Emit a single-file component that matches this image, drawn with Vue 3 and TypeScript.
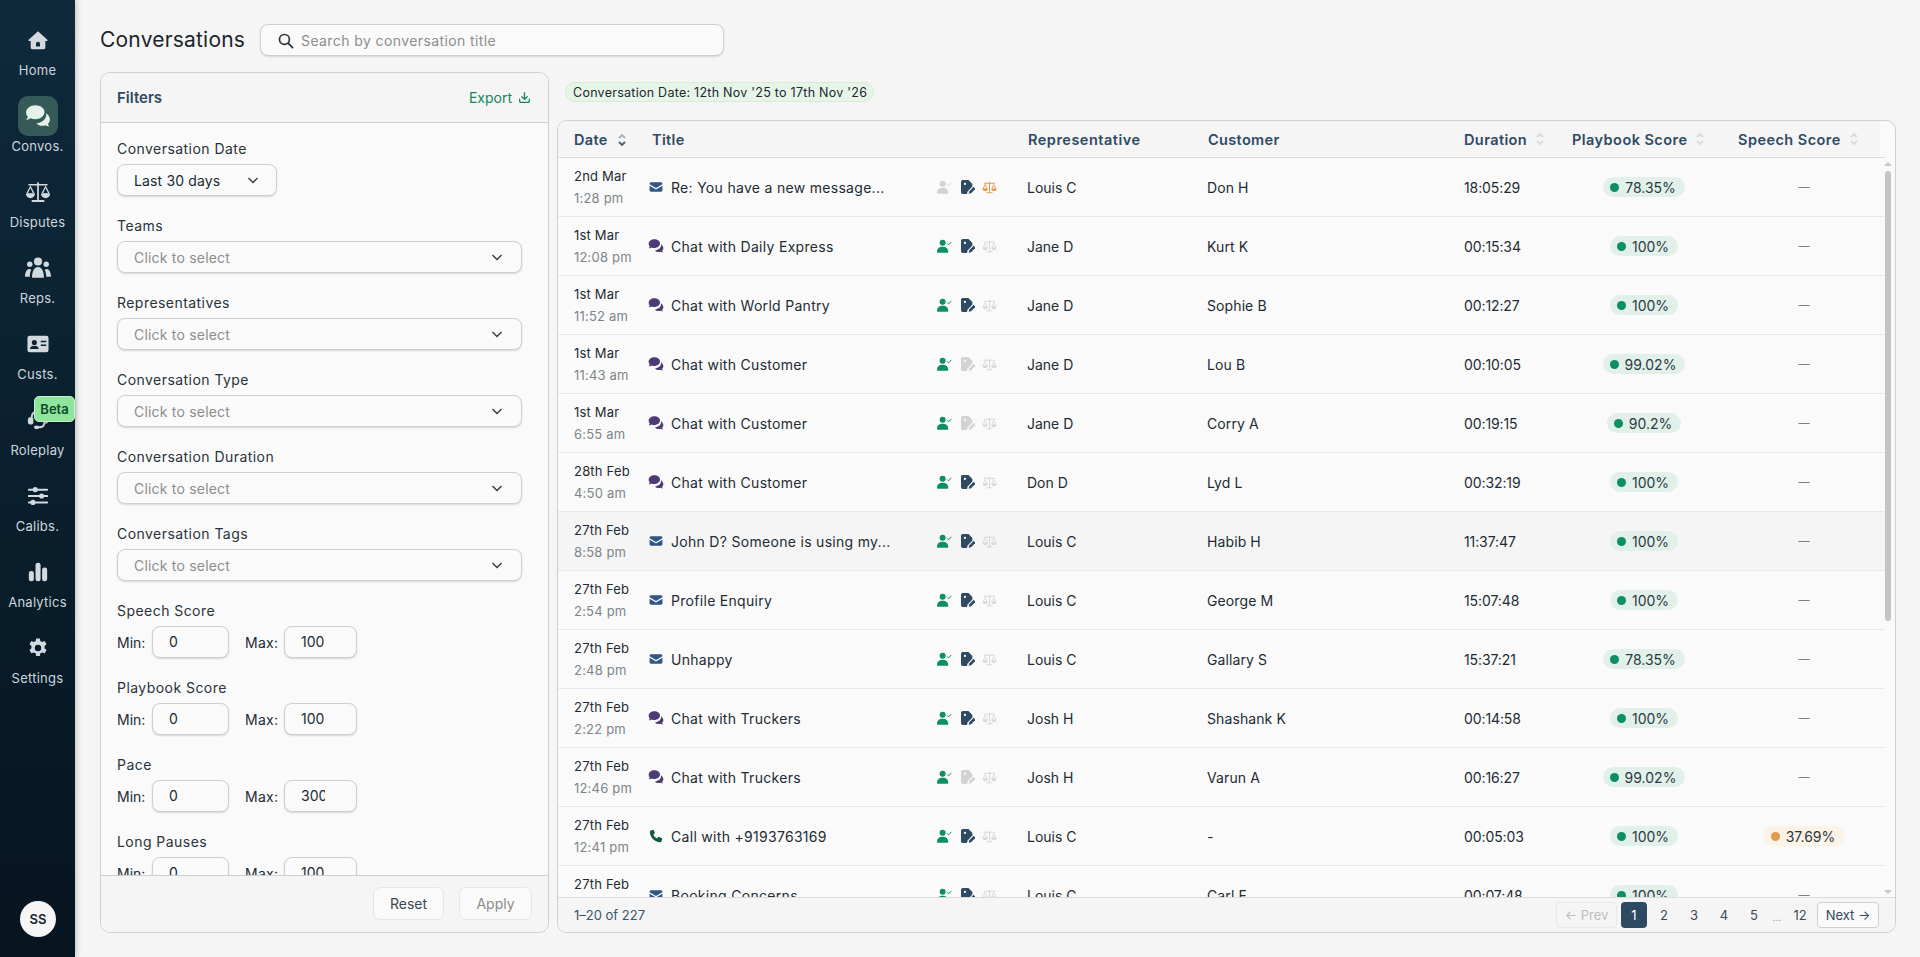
<script setup lang="ts">
type Kind = 'mail' | 'chat' | 'call'
interface Row {
  d: string; t: string; kind: Kind; title: string; agent: boolean; note: boolean; dispute: boolean
  rep: string; cust: string; dur: string; score: string; speech?: string; hover?: boolean
}
const rows: Row[] = [
  { d: '2nd Mar', t: '1:28 pm', kind: 'mail', title: 'Re: You have a new message...', agent: false, note: true, dispute: true, rep: 'Louis C', cust: 'Don H', dur: '18:05:29', score: '78.35%' },
  { d: '1st Mar', t: '12:08 pm', kind: 'chat', title: 'Chat with Daily Express', agent: true, note: true, dispute: false, rep: 'Jane D', cust: 'Kurt K', dur: '00:15:34', score: '100%' },
  { d: '1st Mar', t: '11:52 am', kind: 'chat', title: 'Chat with World Pantry', agent: true, note: true, dispute: false, rep: 'Jane D', cust: 'Sophie B', dur: '00:12:27', score: '100%' },
  { d: '1st Mar', t: '11:43 am', kind: 'chat', title: 'Chat with Customer', agent: true, note: false, dispute: false, rep: 'Jane D', cust: 'Lou B', dur: '00:10:05', score: '99.02%' },
  { d: '1st Mar', t: '6:55 am', kind: 'chat', title: 'Chat with Customer', agent: true, note: false, dispute: false, rep: 'Jane D', cust: 'Corry A', dur: '00:19:15', score: '90.2%' },
  { d: '28th Feb', t: '4:50 am', kind: 'chat', title: 'Chat with Customer', agent: true, note: true, dispute: false, rep: 'Don D', cust: 'Lyd L', dur: '00:32:19', score: '100%' },
  { d: '27th Feb', t: '8:58 pm', kind: 'mail', title: 'John D? Someone is using my...', agent: true, note: true, dispute: false, rep: 'Louis C', cust: 'Habib H', dur: '11:37:47', score: '100%', hover: true },
  { d: '27th Feb', t: '2:54 pm', kind: 'mail', title: 'Profile Enquiry', agent: true, note: true, dispute: false, rep: 'Louis C', cust: 'George M', dur: '15:07:48', score: '100%' },
  { d: '27th Feb', t: '2:48 pm', kind: 'mail', title: 'Unhappy', agent: true, note: true, dispute: false, rep: 'Louis C', cust: 'Gallary S', dur: '15:37:21', score: '78.35%' },
  { d: '27th Feb', t: '2:22 pm', kind: 'chat', title: 'Chat with Truckers', agent: true, note: true, dispute: false, rep: 'Josh H', cust: 'Shashank K', dur: '00:14:58', score: '100%' },
  { d: '27th Feb', t: '12:46 pm', kind: 'chat', title: 'Chat with Truckers', agent: true, note: false, dispute: false, rep: 'Josh H', cust: 'Varun A', dur: '00:16:27', score: '99.02%' },
  { d: '27th Feb', t: '12:41 pm', kind: 'call', title: 'Call with +9193763169', agent: true, note: true, dispute: false, rep: 'Louis C', cust: '-', dur: '00:05:03', score: '100%', speech: '37.69%' },
  { d: '27th Feb', t: '11:20 am', kind: 'mail', title: 'Booking Concerns', agent: true, note: true, dispute: false, rep: 'Louis C', cust: 'Carl F', dur: '00:07:48', score: '100%' },
]
const nav = ['Home', 'Convos.', 'Disputes', 'Reps.', 'Custs.', 'Roleplay', 'Calibs.', 'Analytics', 'Settings']
const selects = ['Teams', 'Representatives', 'Conversation Type', 'Conversation Duration', 'Conversation Tags']
const ranges = [
  { label: 'Speech Score', max: '100' },
  { label: 'Playbook Score', max: '100' },
  { label: 'Pace', max: '300' },
  { label: 'Long Pauses', max: '100' },
]
</script>

<template>
  <div class="page">
    <aside class="side">
      <div v-for="n in nav" :key="n" class="nav" :class="{ on: n === 'Convos.' }">
        <div class="nav-ic">
          <svg v-if="n === 'Home'" viewBox="0 0 24 24"><path d="M12 2.500 1.800 11.600c-.6.6-.2 1.400.5 1.400H4v7.500c0 .8.7 1.500 1.500 1.500h13c.8 0 1.500-.7 1.500-1.500V13h1.700c.7 0 1.100-.8.500-1.400L12 2.500Zm0 11.500a2.200 2.200 0 0 1 2.200 2.200V19H9.800v-2.800A2.200 2.200 0 0 1 12 14Z" /></svg>
          <svg v-else-if="n === 'Convos.'" viewBox="0 0 24 24"><path d="M9.500 2C4.800 2 1 5 1 8.700c0 1.500.6 2.900 1.700 4-.3 1.200-1.100 2.200-1.700 2.800 1.700 0 3.200-.6 4.200-1.400 1.300.6 2.800.9 4.300.9 4.700 0 8.500-3 8.500-6.700S14.200 2 9.500 2Z" fill="#e4f3ea" /><path d="M19.600 9.400c.1.400.1.800.1 1.200 0 4.400-4.200 7.800-9.200 8 1.300 1.500 3.400 2.400 5.700 2.400 1 0 2-.2 2.900-.5.800.6 2 1.100 3.400 1.100-.5-.5-1.100-1.300-1.400-2.200 1.200-1 1.900-2.400 1.900-3.900 0-2.500-1.400-4.700-3.400-6.100Z" fill="#e4f3ea" /></svg>
          <svg v-else-if="n === 'Disputes'" class="wide" viewBox="0 0 24 20"><rect x="11.200" y="1" width="1.600" height="17" /><rect x="6" y="17.300" width="12" height="2" rx="1" /><rect x="3" y="2.500" width="18" height="1.600" rx=".8" /><path d="M5 4 1 11.500h8Zm0 2.300L7.200 11H2.800ZM19 4l-4 7.500h8Zm0 2.300 2.200 4.700h-4.400Z" /><path d="M.8 11.500h8.400a4.200 4.200 0 0 1-8.400 0ZM14.800 11.500h8.400a4.200 4.200 0 0 1-8.400 0Z" /></svg>
          <svg v-else-if="n === 'Reps.'" class="wide" viewBox="0 0 24 20"><circle cx="12" cy="4" r="3.800" /><circle cx="4.400" cy="6.500" r="2.500" /><circle cx="19.600" cy="6.500" r="2.500" /><path d="M6.500 19c0-6 2-10 5.500-10s5.500 4 5.500 10ZM0 18c.2-4 1.600-7 4-7 .8 0 1.300.2 1.800.6C4.800 13.400 4.500 15.600 4.400 18ZM24 18c-.2-4-1.600-7-4-7-.8 0-1.300.2-1.800.6 1 1.800 1.300 4 1.400 6.400Z" /></svg>
          <svg v-else-if="n === 'Custs.'" viewBox="0 0 24 24"><path fill-rule="evenodd" d="M3 3h18a2.500 2.500 0 0 1 2.500 2.500v13A2.500 2.500 0 0 1 21 21H3a2.500 2.500 0 0 1-2.500-2.500v-13A2.500 2.500 0 0 1 3 3Zm5 4.500a2.800 2.800 0 1 0 0 5.600 2.800 2.800 0 0 0 0-5.600ZM3.200 17.500h9.600c0-2.500-2.100-3.700-4.800-3.700s-4.800 1.200-4.800 3.700ZM15 8.500v1.700h6V8.500Zm0 4v1.700h6v-1.700Z" /></svg>
          <svg v-else-if="n === 'Roleplay'" viewBox="0 0 24 24"><path d="M4 9a8 8 0 0 1 16 0v6a6 6 0 0 1-6 6h-3v-2.200h3a3.800 3.800 0 0 0 3.800-3.800V9a5.800 5.800 0 0 0-11.600 0v6H4Z" /><rect x="1" y="9" width="6" height="8" rx="2.500" /><rect x="18" y="9" width="5" height="7" rx="2" /><ellipse cx="10.500" cy="20" rx="3" ry="2" /></svg>
          <svg v-else-if="n === 'Calibs.'" viewBox="0 0 24 24"><rect x="1" y="4" width="22" height="2.200" rx="1" /><rect x="1" y="11" width="22" height="2.200" rx="1" /><rect x="1" y="18" width="22" height="2.200" rx="1" /><circle cx="9" cy="5" r="2.800" /><circle cx="16" cy="12" r="2.800" /><circle cx="6.500" cy="19" r="2.800" /></svg>
          <svg v-else-if="n === 'Analytics'" viewBox="0 0 24 24"><rect x="2" y="11" width="5.500" height="11" rx="2.500" /><rect x="9.300" y="2" width="5.500" height="20" rx="2.500" /><rect x="16.500" y="7" width="5.500" height="15" rx="2.500" /></svg>
          <svg v-else viewBox="0 0 24 24"><path fill-rule="evenodd" d="M10 1h4l.6 3c.7.2 1.300.5 1.900.9l2.800-1.100 2 3.500-2.200 2c.1.400.1.800.1 1.200s0 .9-.1 1.300l2.200 2-2 3.500-2.800-1c-.6.400-1.200.7-1.900.9l-.6 3h-4l-.6-3a7 7 0 0 1-1.900-.9l-2.800 1-2-3.500 2.200-2c-.1-.4-.1-.8-.1-1.300s0-.8.100-1.200l-2.200-2 2-3.500 2.800 1.100c.6-.4 1.200-.7 1.900-.9ZM12 8a3.500 3.500 0 1 0 0 7 3.500 3.500 0 0 0 0-7Z" transform="translate(0 .5)" /></svg>
        </div>
        <span class="nav-l">{{ n }}</span>
        <span v-if="n === 'Roleplay'" class="beta">Beta</span>
      </div>
      <div class="avatar">SS</div>
    </aside>

    <main class="main">
      <header class="top">
        <h1>Conversations</h1>
        <div class="search">
          <svg viewBox="0 0 24 24" class="s-ic"><circle cx="10.500" cy="10.500" r="7" /><path d="m16 16 6 6" /></svg>
          <span>Search by conversation title</span>
        </div>
      </header>

      <div class="cols">
        <section class="filters">
          <div class="f-head">
            <b>Filters</b>
            <span class="export">Export
              <svg viewBox="0 0 24 24"><path d="M12 3v12M7 10.500l5 5 5-5M3 15v3.500A2.500 2.500 0 0 0 5.500 21h13a2.500 2.500 0 0 0 2.500-2.500V15" /></svg>
            </span>
          </div>
          <div class="f-body">
            <div class="fld">
              <label>Conversation Date</label>
              <div class="sel short"><span class="val">Last 30 days</span><svg viewBox="0 0 12 12" class="chev"><path d="m1.500 4 4.500 4.500L10.500 4" /></svg></div>
            </div>
            <div v-for="s in selects" :key="s" class="fld">
              <label>{{ s }}</label>
              <div class="sel"><span class="ph">Click to select</span><svg viewBox="0 0 12 12" class="chev"><path d="m1.500 4 4.500 4.500L10.500 4" /></svg></div>
            </div>
            <div v-for="r in ranges" :key="r.label" class="fld">
              <label>{{ r.label }}</label>
              <div class="range">
                <span class="rl">Min:</span><div class="num"><span class="nv">0</span></div>
                <span class="rl mx">Max:</span><div class="num nm"><span class="nv">{{ r.max }}</span></div>
              </div>
            </div>
          </div>
          <div class="f-foot">
            <div class="btn">Reset</div>
            <div class="btn dis">Apply</div>
          </div>
        </section>

        <section class="right">
          <div class="chip-row"><span class="chip">Conversation Date: 12th Nov '25 to 17th Nov '26</span></div>
          <div class="table">
            <div class="tbody-wrap">
              <div class="row head">
                <div class="c date">Date
                  <svg class="sort first" viewBox="0 0 10 16"><path d="M2 6 5 3l3 3" stroke="#aab2b8" /><path d="m2 10 3 3 3-3" stroke="#4a5d6c" /></svg>
                </div>
                <div class="c title">Title</div>
                <div class="c stat"></div>
                <div class="c rep">Representative</div>
                <div class="c cust">Customer</div>
                <div class="c dur">Duration<svg class="sort" viewBox="0 0 10 16"><path d="M2 6 5 3l3 3M2 10l3 3 3-3" stroke="#d8dbdd" /></svg></div>
                <div class="c pb">Playbook Score<svg class="sort" viewBox="0 0 10 16"><path d="M2 6 5 3l3 3M2 10l3 3 3-3" stroke="#d8dbdd" /></svg></div>
                <div class="c sp">Speech Score<svg class="sort" viewBox="0 0 10 16"><path d="M2 6 5 3l3 3M2 10l3 3 3-3" stroke="#d8dbdd" /></svg></div>
              </div>
              <div v-for="(r, i) in rows" :key="i" class="row" :class="{ hover: r.hover }">
                <div class="c date"><div class="d1">{{ r.d }}</div><div class="d2">{{ r.t }}</div></div>
                <div class="c title">
                  <svg v-if="r.kind === 'mail'" class="k" viewBox="0 0 24 24" fill="#2f5685"><path d="M3.500 4h17A2.500 2.500 0 0 1 23 6.500v.6l-11 6.400L1 7.100v-.6A2.500 2.500 0 0 1 3.500 4ZM1 9.800l11 6.400 11-6.400v7.700a2.500 2.500 0 0 1-2.500 2.500h-17A2.500 2.500 0 0 1 1 17.500Z" /></svg>
                  <svg v-else-if="r.kind === 'chat'" class="k chat" viewBox="0 0 24 24" fill="#4f3a78"><path d="M9.500 2C4.800 2 1 5 1 8.700c0 1.500.6 2.900 1.700 4-.3 1.200-1.100 2.200-1.700 2.800 1.700 0 3.200-.6 4.200-1.400 1.300.6 2.800.9 4.300.9 4.700 0 8.500-3 8.500-6.700S14.200 2 9.500 2Z" /><path d="M19.600 9.400c.1.400.1.800.1 1.200 0 4.400-4.200 7.800-9.200 8 1.300 1.500 3.400 2.400 5.700 2.400 1 0 2-.2 2.900-.5.800.6 2 1.100 3.400 1.100-.5-.5-1.100-1.300-1.400-2.200 1.200-1 1.900-2.400 1.900-3.900 0-2.500-1.400-4.700-3.400-6.100Z" /></svg>
                  <svg v-else class="k" viewBox="0 0 24 24" fill="#0f5a3c"><path d="M6.500 1.500 3 2.500C2 2.800 1.500 3.700 1.500 4.700c0 9.800 8 17.800 17.800 17.800 1 0 1.900-.5 2.200-1.500l1-3.500c.2-.8-.2-1.700-1-2l-4.200-1.800c-.7-.3-1.500-.1-2 .5l-1.500 1.900c-2.800-1.400-5-3.700-6.400-6.400l1.900-1.500c.6-.5.8-1.300.5-2L8.500 2.500c-.3-.8-1.200-1.200-2-1Z" /></svg>
                  <span class="tt">{{ r.title }}</span>
                </div>
                <div class="c stat">
                  <svg class="st u" viewBox="0 0 20 18" :fill="r.agent ? '#0c8f63' : '#d3d3d3'"><circle cx="7.500" cy="4.500" r="4" /><path d="M0 17c0-4.500 3-7 7.500-7s7.500 2.500 7.500 7c0 .5-.4 1-1 1H1c-.6 0-1-.5-1-1Z" /><path d="m13.500 5.500 2 2 3.500-4" fill="none" :stroke="r.agent ? '#0c8f63' : '#d3d3d3'" stroke-width="1.300" /></svg>
                  <svg class="st n" viewBox="0 0 16 16" :fill="r.note ? '#2f4a63' : '#d3d3d3'"><path d="M2 0h6.500L13 4.500v3L7.500 13l-.7 3H2a2 2 0 0 1-2-2V2a2 2 0 0 1 2-2Z" /><circle cx="4.500" cy="4.500" r="1.300" fill="#fafafa" /><path d="m8.800 15.700.5-2.700 5.200-5.200 2.200 2.200-5.200 5.200Z" /></svg>
                  <svg class="st d" viewBox="0 0 24 20" :fill="r.dispute ? '#e29a4a' : '#d8d8d8'"><rect x="11.200" y="1" width="1.600" height="17" /><rect x="7" y="17.500" width="10" height="1.800" rx=".9" /><rect x="3" y="2.500" width="18" height="1.600" rx=".8" /><path d="M5 4 1 11.500h8Zm0 2.300L7.200 11H2.800ZM19 4l-4 7.500h8Zm0 2.300 2.200 4.700h-4.400Z" /><path d="M.8 11.500h8.400a4.200 4.200 0 0 1-8.400 0ZM14.800 11.500h8.400a4.200 4.200 0 0 1-8.400 0Z" /></svg>
                </div>
                <div class="c rep">{{ r.rep }}</div>
                <div class="c cust">{{ r.cust }}</div>
                <div class="c dur">{{ r.dur }}</div>
                <div class="c pb"><span class="pill g"><i></i>{{ r.score }}</span></div>
                <div class="c sp">
                  <span v-if="r.speech" class="pill o"><i></i>{{ r.speech }}</span>
                  <span v-else class="dash">—</span>
                </div>
              </div>
            </div>
            <div class="sb">
              <span class="arr up"></span>
              <span class="thumb"></span>
              <span class="arr dn"></span>
            </div>
            <div class="t-foot">
              <span class="count">1–20 of 227</span>
              <div class="pager">
                <span class="pbtn off">← Prev</span>
                <span class="pg cur">1</span>
                <span class="pg">2</span>
                <span class="pg">3</span>
                <span class="pg">4</span>
                <span class="pg">5</span>
                <span class="ell">...</span>
                <span class="pg">12</span>
                <span class="pbtn">Next →</span>
              </div>
            </div>
          </div>
        </section>
      </div>
    </main>
  </div>
</template>

<style>
html, body { margin: 0; background: #f5f5f5; overflow: hidden; }
</style>

<style scoped>
* { box-sizing: border-box; }
.page { display: flex; height: 957px; width: 1920px; font-family: Inter, "Liberation Sans", sans-serif; font-size: 14px; color: #222b33; background: #f5f5f5; overflow: hidden; }
.side { width: 75px; flex: none; background: linear-gradient(180deg, #0e2a3c, #06141f); box-shadow: 2px 0 5px rgba(0,0,0,.18); display: flex; flex-direction: column; align-items: center; padding-top: 20px; position: relative; z-index: 2; }
.nav { width: 75px; height: 76px; display: flex; flex-direction: column; align-items: center; position: relative; color: #cdd6dc; }
.nav-ic { width: 40px; height: 40px; display: flex; align-items: center; justify-content: center; border-radius: 10px; }
.nav-ic svg { width: 22px; height: 22px; fill: #d3dade; }
.nav-ic svg.wide { width: 26px; height: 22px; }
.nav.on .nav-ic { background: #355a58; }
.nav.on .nav-ic svg { width: 26px; height: 26px; }
.nav-l { font-size: 13px; letter-spacing: .25px; line-height: 16px; margin-top: 2px; }
.beta { position: absolute; left: 34px; top: -4px; width: 41px; height: 26px; background: #8ee59b; border: 1px solid #c6f2cc; border-radius: 5px; color: #0d4a2b; font-size: 13px; font-weight: 600; display: flex; align-items: center; justify-content: center; box-shadow: 0 1px 3px rgba(0,0,0,.3); }
.avatar { position: absolute; left: 20px; top: 901px; width: 36px; height: 36px; border-radius: 50%; background: #f5f5f5; color: #17222b; font-size: 13px; font-weight: 600; display: flex; align-items: center; justify-content: center; }

.main { flex: 1; padding: 24px 25px 24px 25px; display: flex; flex-direction: column; min-width: 0; }
.top { display: flex; align-items: center; gap: 15px; height: 32px; margin-bottom: 16px; }
h1 { margin: 0; font-size: 21px; letter-spacing: .2px; font-weight: 400; line-height: 32px; color: #1c252c; width: 145px; white-space: nowrap; }
.search { width: 464px; height: 32px; background: #fafafa; border: 1px solid #cfcfcf; border-radius: 8px; box-shadow: 0 1px 2px rgba(0,0,0,.12); display: flex; align-items: center; padding-left: 16px; gap: 7px; color: #8d8d8d; font-size: 14px; letter-spacing: .4px; }
.s-ic { width: 17px; height: 17px; fill: none; stroke: #2c3338; stroke-width: 2.400; stroke-linecap: round; }
.cols { display: flex; gap: 8px; flex: 1; min-height: 0; }

.filters { width: 449px; flex: none; height: 861px; border: 1px solid #cfcfcf; border-radius: 10px; background: #fafafa; display: flex; flex-direction: column; overflow: hidden; }
.f-head { height: 50px; flex: none; background: #f5f5f5; border-bottom: 1px solid #cfcfcf; display: flex; align-items: center; justify-content: space-between; padding: 0 17px 0 16px; }
.f-head b { font-size: 15px; font-weight: 600; color: #2f4a63; }
.export { display: flex; align-items: center; gap: 6px; color: #16855f; font-size: 14px; }
.export svg { width: 13px; height: 13px; fill: none; stroke: #16855f; stroke-width: 2.400; stroke-linecap: round; stroke-linejoin: round; }
.f-body { flex: 1; overflow: hidden; padding: 15px 16px 0 16px; min-height: 0; }
.fld { height: 77px; flex: none; }
.fld label { display: block; font-size: 14px; letter-spacing: .45px; line-height: 22px; color: #29333b; margin-bottom: 4px; }
.sel { width: 405px; height: 32px; border: 1px solid #cfcfcf; border-radius: 8px; background: #fafafa; box-shadow: 0 1px 2px rgba(0,0,0,.14); display: flex; align-items: center; justify-content: space-between; padding: 0 18px 0 16px; }
.sel.short { width: 160px; padding-right: 17px; }
.ph { color: #8d8d8d; font-size: 14px; letter-spacing: .2px; }
.val { font-size: 14px; letter-spacing: .15px; }
.chev { width: 12px; height: 12px; fill: none; stroke: #333c44; stroke-width: 1.400; }
.range { display: flex; align-items: center; height: 32px; }
.rl { width: 35px; font-size: 14px; }
.rl.mx { width: 39px; margin-left: 16px; letter-spacing: .3px; }
.num { width: 77px; height: 32px; border: 1px solid #cfcfcf; border-radius: 8px; background: #fafafa; box-shadow: 0 1px 2px rgba(0,0,0,.14); padding-left: 16px; line-height: 30px; font-size: 14px; }
.num.nm { width: 73px; }
.nv { display: block; width: 24px; overflow: hidden; }
.f-foot { height: 57px; flex: none; background: #f5f5f5; border-top: 1px solid #cfcfcf; display: flex; align-items: center; justify-content: flex-end; gap: 15px; padding: 0 16px 2px 0; }
.btn { width: 71px; height: 33px; background: #fafafa; border: 1px solid #e6e6e6; border-radius: 7px; display: flex; align-items: center; justify-content: center; font-size: 14px; color: #3c4650; }
.btn.dis { width: 73px; color: #8b8b8b; }

.right { flex: 1; min-width: 0; height: 861px; display: flex; flex-direction: column; }
.chip-row { height: 48px; flex: none; padding: 10px 0 0 8px; }
.chip { display: inline-flex; align-items: center; height: 20px; padding: 0 6px 0 7px; background: #e7f5e8; border: 1px solid #d6edd8; border-radius: 10px; font-size: 12.500px; letter-spacing: .26px; color: #20282f; white-space: nowrap; }
.table { flex: 1; min-height: 0; width: 1339px; border: 1px solid #cfcfcf; border-radius: 10px; background: #fafafa; position: relative; overflow: hidden; display: flex; flex-direction: column; }
.tbody-wrap { flex: 1; min-height: 0; overflow: hidden; }
.row { display: flex; height: 59px; border-bottom: 1px solid #e8e8e8; width: 1327px; align-items: center; }
.row.hover { background: #f5f5f5; }
.row.head { height: 37px; background: #f5f5f5; width: 1322px; border-bottom: 1px solid #dcdcdc; font-weight: 600; color: #2f4a63; font-size: 14.500px; letter-spacing: .35px; position: relative; }
.row.head::after { content: ""; position: absolute; left: 1322px; width: 5px; bottom: -1px; height: 1px; background: #dcdcdc; }
.c { flex: none; padding: 0; white-space: nowrap; }
.date { width: 91px; padding-left: 16px; }
.d1 { font-size: 13px; letter-spacing: .2px; line-height: 22px; color: #222b33; }
.d2 { font-size: 13px; letter-spacing: .2px; line-height: 22px; color: #7d8589; }
.title { width: 288px; display: flex; align-items: center; }
.k { width: 14px; height: 14px; margin-right: 8px; flex: none; }
.k.chat { width: 16px; height: 16px; margin-left: -1px; margin-right: 7px; }
.row.head .title { padding-left: 3px; }
.tt { font-size: 14px; letter-spacing: .3px; }
.stat { width: 90px; display: flex; align-items: center; }
.st { flex: none; }
.st.u { width: 15px; height: 14px; }
.st.n { width: 14px; height: 14px; margin-left: 9px; }
.st.d { width: 15px; height: 13px; margin-left: 7px; }
.rep { width: 180px; font-size: 14px; }
.row.head .rep { padding-left: 1px; font-size: 14.500px; letter-spacing: .5px; }
.cust { width: 257px; font-size: 14px; letter-spacing: .1px; }
.row.head .cust { padding-left: 1px; font-size: 14.500px; letter-spacing: .35px; }
.dur { width: 107px; display: flex; align-items: center; font-size: 14px; letter-spacing: -.1px; }
.row.head .dur { font-size: 14.500px; letter-spacing: .4px; }
.pb { width: 166px; display: flex; align-items: center; justify-content: center; padding-right: 20px; }
.sp { width: 148px; display: flex; align-items: center; justify-content: center; padding-right: 14px; }
.row.head .pb, .row.head .sp { justify-content: flex-start; padding-right: 0; letter-spacing: .45px; padding-left: 1px; }
.sort { width: 10px; height: 16px; margin-left: 8px; fill: none; stroke-width: 1.800; flex: none; }
.sort.first { margin-left: 5px; vertical-align: -3px; }
.sort path { fill: none; }
.pill { display: inline-flex; align-items: center; height: 20px; padding: 0 9px 0 7px; border-radius: 10px; font-size: 14px; color: #2b3842; gap: 6px; }
.pill i { width: 9px; height: 9px; border-radius: 50%; }
.pill.g { background: #e2f0ea; }
.pill.g i { background: #0c8f63; }
.pill.o { background: #fbf3e6; }
.pill.o i { background: #e09a4f; }
.dash { color: #7f7f7f; font-size: 11px; }
.sb { position: absolute; right: 0; top: 37px; width: 13px; bottom: 35px; }
.thumb { position: absolute; left: 3px; top: 13px; width: 6px; height: 450px; background: #c4c4c4; border-radius: 3px; }
.arr { position: absolute; left: 2px; width: 0; height: 0; border-left: 4px solid transparent; border-right: 4px solid transparent; }
.arr.up { top: 4px; border-bottom: 4px solid #c9c9c9; }
.arr.dn { bottom: 3px; border-top: 4px solid #c9c9c9; }
.t-foot { height: 35px; flex: none; background: #f5f5f5; border-top: 1px solid #dcdcdc; display: flex; align-items: center; justify-content: space-between; padding: 0 16px; position: relative; }
.count { font-size: 13px; color: #3c5468; }
.pager { display: flex; align-items: center; }
.pbtn { height: 26px; width: 62px; border: 1px solid #cfcfcf; border-radius: 4px; background: #fafafa; display: flex; align-items: center; justify-content: center; font-size: 13px; color: #34495c; margin-left: 2px; }
.pbtn.off { width: 61px; margin: 0 4px 0 0; border-color: #e8e8e8; color: #bdbdbd; background: #f5f5f5; }
.pg { width: 30px; height: 26px; display: flex; align-items: center; justify-content: center; font-size: 13px; color: #3d4a55; }
.pg.cur { width: 26px; background: #2d4a63; color: #fff; border-radius: 4px; margin-right: 2px; }
.ell { width: 16px; text-align: center; font-size: 10px; color: #7f8a92; padding-top: 4px; }
</style>
